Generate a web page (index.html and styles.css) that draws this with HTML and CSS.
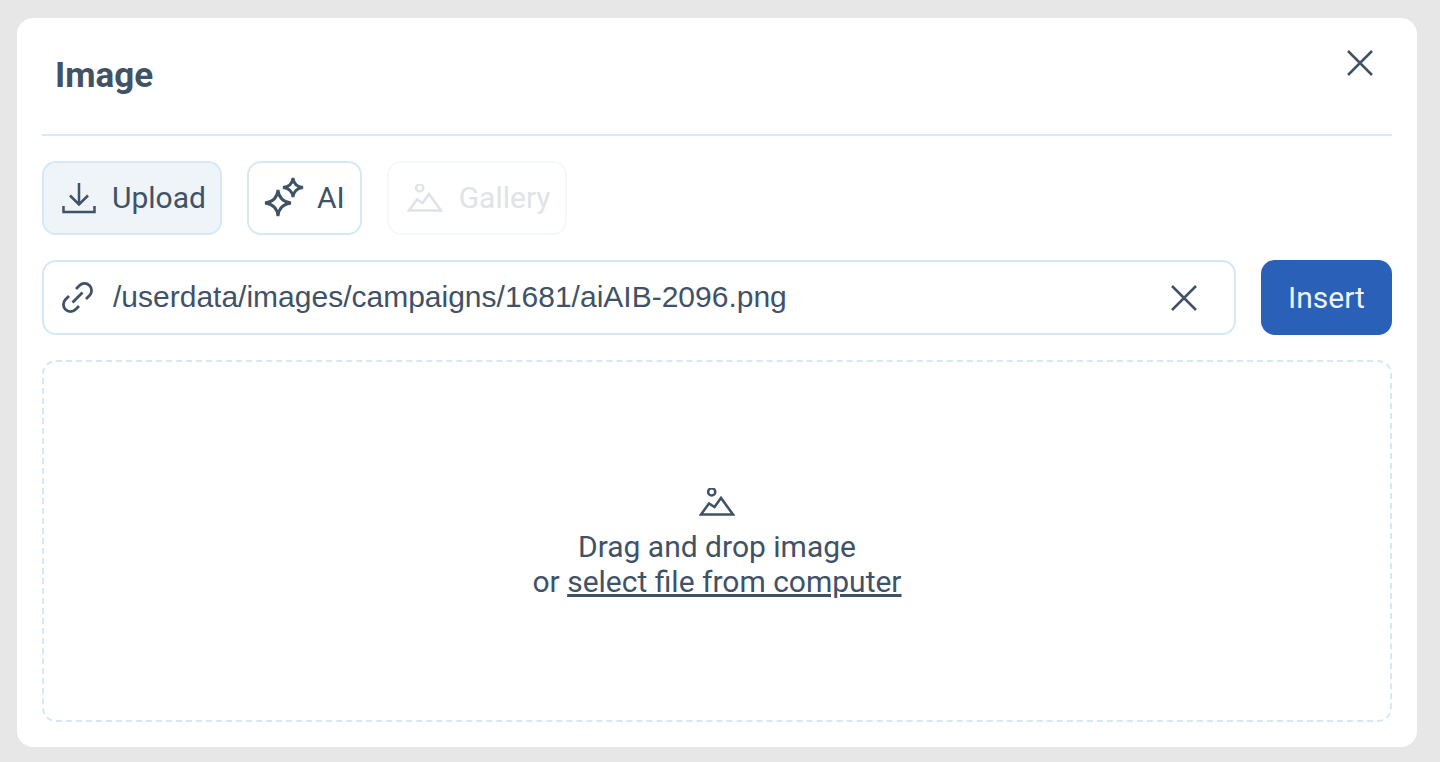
FILE: index.html
```html
<!DOCTYPE html>
<html lang="en">
  <head>
    <meta charset="UTF-8">
    <meta name="viewport" content="width=device-width, initial-scale=1.0">
    <title>Image</title>
    <link rel="stylesheet" href="styles.css">
  </head>
  <body>
    <div class="modal">
      <!-- Header -->
      <header class="modal-header">
        <h1>Image</h1>
        <button class="close-btn" aria-label="Close">
          <svg width="30" height="30" viewBox="0 0 30 30"><path d="M3 3 L27 27 M27 3 L3 27"/></svg>
        </button>
      </header>
      <!-- Tabs -->
      <div class="tabs">
        <button class="tab tab-active">
          <svg width="36" height="32" viewBox="0 0 36 32"><path d="M17 1 V23 M8 13.5 L17 22.5 L26 13.5 M1.5 24 V30 H32.5 V24"/></svg>
          Upload
        </button>
        <button class="tab tab-ai">
          <svg class="sparkle-icon" width="42" height="42" viewBox="0 0 42 42"><path d="M15 13 Q16.3 24.7 28 26 Q16.3 27.3 15 39 Q13.7 27.3 2 26 Q13.7 24.7 15 13 Z M30 1 Q31 9.5 40 10.5 Q31 11.5 30 20 Q29 11.5 20 10.5 Q29 9.5 30 1 Z"/></svg>
          AI
        </button>
        <button class="tab tab-disabled">
          <svg width="36" height="28" viewBox="0 0 36 28"><circle cx="12.7" cy="3.9" r="3.6"/><path d="M2 26.5 H34 L22 10 L15.5 19 L10 15.5 Z"/></svg>
          Gallery
        </button>
      </div>
      <!-- URL row -->
      <div class="url-row">
        <div class="url-field">
          <svg class="link-icon" width="34" height="34" viewBox="0 0 34 34"><path d="M14 8 L17.5 4.5 A7.07 7.07 0 0 1 27.5 14.5 L24 18 M17 25 L13.5 28.5 A7.07 7.07 0 0 1 3.5 18.5 L7 15 M10.5 21.5 L20.5 11.5"/></svg>
          <input class="url-input" type="text" value="/userdata/images/campaigns/1681/aiAIB-2096.png">
          <button class="clear-btn" aria-label="Clear">
            <svg width="30" height="30" viewBox="0 0 30 30"><path d="M3 3 L27 27 M27 3 L3 27"/></svg>
          </button>
        </div>
        <button class="insert-btn">Insert</button>
      </div>
      <!-- Drop zone -->
      <div class="dropzone">
        <svg width="36" height="28" viewBox="0 0 36 28"><circle cx="12.7" cy="3.9" r="3.6"/><path d="M2 26.5 H34 L22 10 L15.5 19 L10 15.5 Z"/></svg>
        <p>Drag and drop image<br>or <a href="#">select file from computer</a></p>
      </div>
    </div>
  </body>
</html>
```

FILE: styles.css
```css
/* General Styles */
html, body {
  height: 100%;
}

body {
  margin: 0;
  padding: 18px 23px 15px 17px;
  box-sizing: border-box;
  background: #e7e7e7;
  color: #3f5266;
  font-family: Roboto, "Liberation Sans", sans-serif;
  overflow: hidden;
}

button {
  font-family: inherit;
  cursor: pointer;
}

svg {
  fill: none;
  stroke: currentColor;
  stroke-width: 2.5;
  flex: none;
}

.modal {
  height: 100%;
  box-sizing: border-box;
  padding: 0 25px 25px;
  display: flex;
  flex-direction: column;
  gap: 25px;
  background: #fff;
  border-radius: 16px;
}

/* Header */
.modal-header {
  height: 118px;
  box-sizing: border-box;
  flex: none;
  display: flex;
  justify-content: space-between;
  align-items: flex-start;
  padding: 30px 17px 0 13px;
  border-bottom: 2px solid #d9e9f7;
}

.modal-header h1 {
  margin: 8px 0 0;
  font-size: 35px;
  line-height: 40px;
  font-weight: 700;
}

.close-btn,
.clear-btn {
  padding: 0;
  border: 0;
  background: none;
  color: inherit;
  display: flex;
}

/* Tabs */
.tabs {
  display: flex;
  gap: 25px;
  flex: none;
}

.tab {
  height: 74px;
  padding: 0 14px 1px 18px;
  display: flex;
  align-items: center;
  gap: 14px;
  background: #fff;
  border: 2px solid #d6e8f8;
  border-radius: 14px;
  color: inherit;
  font-size: 30px;
}

.tab svg {
  margin-bottom: -1px;
}

.tab-active {
  background: #eff4f9;
}

.tab-ai {
  padding: 0 15px 1px 14px;
  gap: 12px;
}

.tab-disabled {
  gap: 16px;
  border-color: #f4f8fc;
  color: #dfe3e8;
}

.sparkle-icon {
  stroke-width: 2.8;
}

/* URL row */
.url-row {
  display: flex;
  gap: 25px;
  flex: none;
}

.url-field {
  flex: 1;
  height: 75px;
  box-sizing: border-box;
  padding: 0 35px 0 18px;
  display: flex;
  align-items: center;
  gap: 17px;
  border: 2px solid #d6e8f8;
  border-radius: 14px;
}

.link-icon {
  stroke-width: 2.8;
}

.url-input {
  flex: 1;
  min-width: 0;
  padding: 0 0 2px;
  border: 0;
  outline: 0;
  color: inherit;
  font-family: "Liberation Sans", sans-serif;
  font-size: 30px;
}

.insert-btn {
  width: 131px;
  height: 75px;
  border: 0;
  border-radius: 14px;
  background: #2a60b7;
  color: #eef3fa;
  font-size: 30px;
}

/* Drop zone */
.dropzone {
  flex: 1;
  display: flex;
  flex-direction: column;
  align-items: center;
  justify-content: center;
  gap: 13px;
  padding-top: 5px;
  border: 2px dashed #d6e8f8;
  border-radius: 14px;
}

.dropzone p {
  margin: 0;
  text-align: center;
  font-size: 30px;
  line-height: 35px;
}

.dropzone a {
  color: inherit;
}
```
